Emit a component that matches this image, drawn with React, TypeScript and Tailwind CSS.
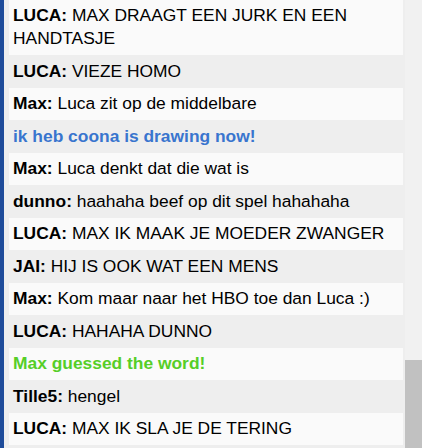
import type { ReactNode } from 'react';

type Msg =
  | { kind: 'chat'; name: string; text: string }
  | { kind: 'drawing'; text: string }
  | { kind: 'guessed'; text: string };

const messages: Msg[] = [
  { kind: 'chat', name: 'LUCA', text: 'MAX DRAAGT EEN JURK EN EEN HANDTASJE' },
  { kind: 'chat', name: 'LUCA', text: 'VIEZE HOMO' },
  { kind: 'chat', name: 'Max', text: 'Luca zit op de middelbare' },
  { kind: 'drawing', text: 'ik heb coona is drawing now!' },
  { kind: 'chat', name: 'Max', text: 'Luca denkt dat die wat is' },
  { kind: 'chat', name: 'dunno', text: 'haahaha beef op dit spel hahahaha' },
  { kind: 'chat', name: 'LUCA', text: 'MAX IK MAAK JE MOEDER ZWANGER' },
  { kind: 'chat', name: 'JAI', text: 'HIJ IS OOK WAT EEN MENS' },
  { kind: 'chat', name: 'Max', text: 'Kom maar naar het HBO toe dan Luca :)' },
  { kind: 'chat', name: 'LUCA', text: 'HAHAHA DUNNO' },
  { kind: 'guessed', text: 'Max guessed the word!' },
  { kind: 'chat', name: 'Tille5', text: 'hengel' },
  { kind: 'chat', name: 'LUCA', text: 'MAX IK SLA JE DE TERING' },
];

function Row({ msg, odd }: { msg: Msg; odd: boolean }) {
  let body: ReactNode;
  if (msg.kind === 'chat') {
    body = (
      <>
        <b className="font-bold">{msg.name}: </b>
        {msg.text}
      </>
    );
  } else if (msg.kind === 'drawing') {
    body = <b className="font-bold text-[#3975ce]">{msg.text}</b>;
  } else {
    body = <b className="font-bold text-[#56ce27]">{msg.text}</b>;
  }
  return (
    <p className={`px-[4px] py-[4.5px] leading-[23.5px] ${odd ? 'bg-[#eeeeee]' : 'bg-[#fafafa]'}`}>
      {body}
    </p>
  );
}

export default function App() {
  return (
    <div className="flex h-[448px] w-[422px] overflow-hidden bg-[#eeeeee]">
      {/* blue page edge */}
      <div className="w-[4px] shrink-0 bg-[#1f4c9a]" />

      {/* chat list, scrolled to the bottom */}
      <div className="flex w-[401px] shrink-0 flex-col justify-end overflow-hidden pl-[5px] pr-[2px] pb-[3px] font-['Liberation_Sans',Arial,sans-serif] text-[17.4px] text-black">
        {messages.map((m, i) => (
          <Row key={i} msg={m} odd={i % 2 === 1} />
        ))}
      </div>

      {/* scrollbar */}
      <div className="flex w-[17px] shrink-0 flex-col justify-end bg-[#f1f1f1]">
        <div className="h-[88px] bg-[#c1c1c1]" />
      </div>
    </div>
  );
}
